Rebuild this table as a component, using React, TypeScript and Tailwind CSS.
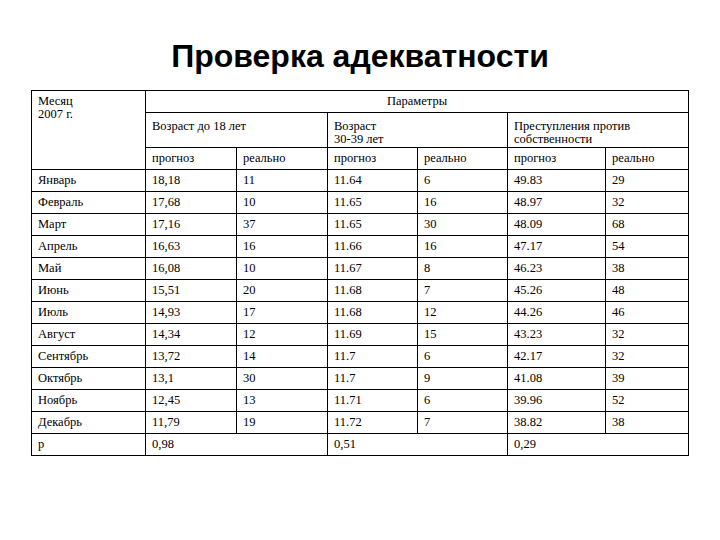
import React from "react";

const rows: [string, string, string, string, string, string, string][] = [
  ["Январь", "18,18", "11", "11.64", "6", "49.83", "29"],
  ["Февраль", "17,68", "10", "11.65", "16", "48.97", "32"],
  ["Март", "17,16", "37", "11.65", "30", "48.09", "68"],
  ["Апрель", "16,63", "16", "11.66", "16", "47.17", "54"],
  ["Май", "16,08", "10", "11.67", "8", "46.23", "38"],
  ["Июнь", "15,51", "20", "11.68", "7", "45.26", "48"],
  ["Июль", "14,93", "17", "11.68", "12", "44.26", "46"],
  ["Август", "14,34", "12", "11.69", "15", "43.23", "32"],
  ["Сентябрь", "13,72", "14", "11.7", "6", "42.17", "32"],
  ["Октябрь", "13,1", "30", "11.7", "9", "41.08", "39"],
  ["Ноябрь", "12,45", "13", "11.71", "6", "39.96", "52"],
  ["Декабрь", "11,79", "19", "11.72", "7", "38.82", "38"],
];

const cell = "border border-black px-[6px] align-middle font-normal text-left";

export default function App() {
  return (
    <div className="w-[720px] h-[540px] bg-white text-black flex flex-col">
      <h1 className="mt-[38px] h-[36px] leading-[36px] text-center text-[32px] font-bold font-['Liberation_Sans',Arial,sans-serif]">
        Проверка адекватности
      </h1>
      <table className="mt-[16px] ml-[31px] w-[657px] table-fixed border-collapse font-['Liberation_Serif','Times_New_Roman',serif] text-[12.5px] leading-[13px]">
        <colgroup>
          <col className="w-[114px]" />
          <col className="w-[91px]" />
          <col className="w-[91px]" />
          <col className="w-[90px]" />
          <col className="w-[90px]" />
          <col className="w-[98px]" />
          <col className="w-[83px]" />
        </colgroup>
        <thead>
          <tr className="h-[22px]">
            <th rowSpan={3} className={`${cell} align-top pt-[4px]`}>
              Месяц
              <br />
              2007 г.
            </th>
            <th colSpan={6} className={`${cell} !text-center`}>
              Параметры
            </th>
          </tr>
          <tr className="h-[35px]">
            <th colSpan={2} className={`${cell} align-top pt-[7px]`}>
              Возраст до 18 лет
            </th>
            <th colSpan={2} className={`${cell} align-top pt-[7px]`}>
              Возраст
              <br />
              30-39 лет
            </th>
            <th colSpan={2} className={`${cell} align-top pt-[7px]`}>
              Преступления против
              <br />
              собственности
            </th>
          </tr>
          <tr className="h-[22px]">
            {["прогноз", "реально", "прогноз", "реально", "прогноз", "реально"].map((t, i) => (
              <th key={i} className={cell}>
                {t}
              </th>
            ))}
          </tr>
        </thead>
        <tbody>
          {rows.map((r) => (
            <tr key={r[0]} className="h-[22px]">
              {r.map((v, i) => (
                <td key={i} className={cell}>
                  {v}
                </td>
              ))}
            </tr>
          ))}
          <tr className="h-[22px]">
            <td className={cell}>р</td>
            <td colSpan={2} className={cell}>
              0,98
            </td>
            <td colSpan={2} className={cell}>
              0,51
            </td>
            <td colSpan={2} className={cell}>
              0,29
            </td>
          </tr>
        </tbody>
      </table>
    </div>
  );
}
